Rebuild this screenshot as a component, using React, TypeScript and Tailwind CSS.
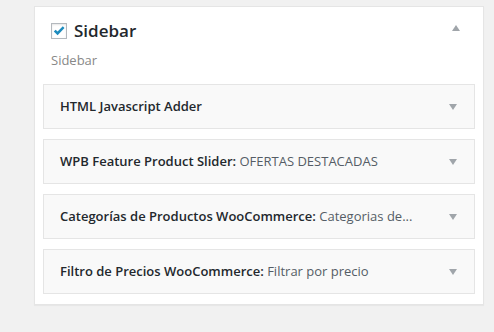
export default function App() {
  const widgets = [
    { title: "HTML Javascript Adder", sub: "" },
    { title: "WPB Feature Product Slider", sub: "OFERTAS DESTACADAS" },
    { title: "Categorías de Productos WooCommerce", sub: "Categorias de..." },
    { title: "Filtro de Precios WooCommerce", sub: "Filtrar por precio" },
  ];

  return (
    <div className="min-h-screen w-[494px] h-[332px] bg-[#f1f1f1] pt-[6px] pl-[34px] font-['Open_Sans',sans-serif]">
      <div className="w-[450px] h-[299px] bg-white border border-[#e5e5e5] shadow-[0_1px_1px_rgba(0,0,0,0.04)] px-2">
        {/* Header */}
        <div className="relative h-[77px] px-2 pt-[12px]">
          <div className="flex items-center gap-[7px] h-6">
            <span className="w-4 h-4 border border-[#b4b9be] bg-white flex items-center justify-center shadow-[inset_0_1px_2px_rgba(0,0,0,0.1)]">
              <svg width="14" height="14" viewBox="0 0 14 14">
                <path d="M1.8 7.4 L3.6 5.7 L5.6 7.6 L10.8 2.2 L12.5 3.9 L5.6 11.2 Z" fill="#1e8cbe" />
              </svg>
            </span>
            <span className="text-[17px] leading-6 font-semibold text-[#23282d]">Sidebar</span>
          </div>
          <div className="mt-[8px] text-[13px] leading-[18px] text-[#888]">Sidebar</div>
          <svg className="absolute right-[15px] top-[18px]" width="8" height="6" viewBox="0 0 8 6">
            <path d="M0 6 L4 0 L8 6 Z" fill="#a0a5aa" />
          </svg>
        </div>

        {/* Widgets */}
        <div className="flex flex-col gap-[10px]">
          {widgets.map((w) => (
            <div
              key={w.title}
              className="h-[45px] border border-[#e5e5e5] bg-[#f9f9f9] flex items-center justify-between pl-4 pr-[17px]"
            >
              <div className="whitespace-nowrap text-[13px] text-[#23282d]">
                <span className="font-semibold">
                  {w.title}
                  {w.sub ? ":" : ""}
                </span>
                {w.sub && <span className="text-[#555d66]"> {w.sub}</span>}
              </div>
              <svg width="8" height="6" viewBox="0 0 8 6">
                <path d="M0 0 L8 0 L4 6 Z" fill="#a0a5aa" />
              </svg>
            </div>
          ))}
        </div>
      </div>
    </div>
  );
}
